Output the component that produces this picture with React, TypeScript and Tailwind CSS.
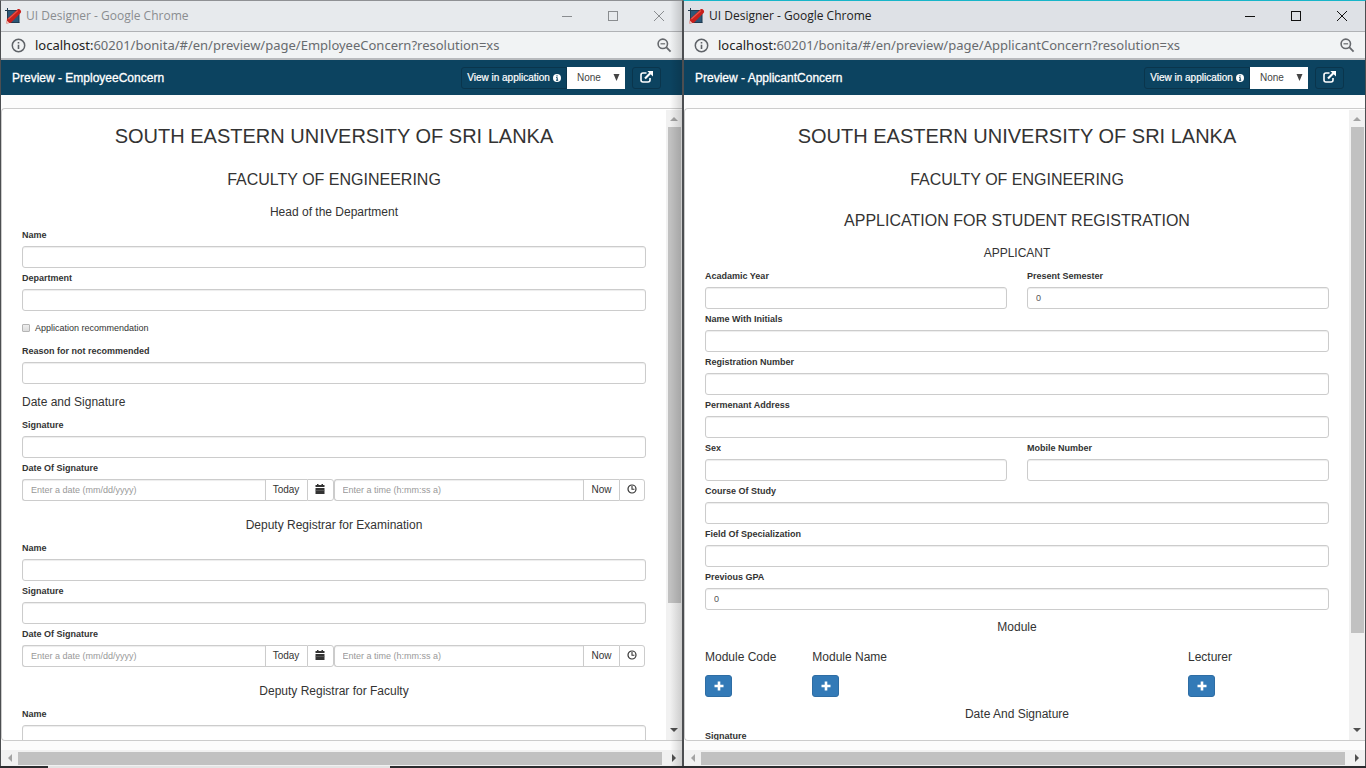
import { useId, type ReactNode } from "react";

const inputClass =
  "block h-[22px] w-full min-w-0 border border-[#ccc] bg-white px-2 text-[9px] text-[#555] shadow-[inset_0_1px_1px_rgba(0,0,0,0.075)] outline-none placeholder:text-[#999]";

function Label({ htmlFor, children }: { htmlFor: string; children: ReactNode }) {
  return (
    <label htmlFor={htmlFor} className="flex h-[21px] items-center text-[9px] font-bold leading-none text-[#333]">
      {children}
    </label>
  );
}

function Field({ label, value }: { label: string; value?: string }) {
  const id = useId();
  return (
    <div>
      <Label htmlFor={id}>{label}</Label>
      <input id={id} type="text" defaultValue={value} className={`${inputClass} rounded-[3px]`} />
    </div>
  );
}

function CalendarIcon() {
  return (
    <svg width="10" height="10" viewBox="0 0 10 10" fill="#333" aria-hidden="true">
      <path d="M0.5 1H2V0h1.5v1h3V0H8v1h1.5v2h-9zM0.5 4h9v2h-9zM0.5 6.6h9V10h-9z" />
      <path d="M0.5 6h9v1h-9z" fill="#555" />
    </svg>
  );
}

function ClockIcon() {
  return (
    <svg width="10" height="10" viewBox="0 0 10 10" fill="none" stroke="#333" aria-hidden="true">
      <circle cx="5" cy="5" r="4" strokeWidth="1.2" />
      <path d="M5 2v3.2h2.4" strokeWidth="1.1" />
    </svg>
  );
}

function DateField({ label }: { label: string }) {
  const id = useId();
  const button = "flex h-[22px] shrink-0 items-center justify-center border border-[#ccc] bg-white pb-[2px] text-[10px] text-[#333]";
  return (
    <div>
      <Label htmlFor={id}>{label}</Label>
      <div className="flex pr-px">
        <div className="flex min-w-0 flex-1">
          <input id={id} type="text" placeholder="Enter a date (mm/dd/yyyy)" className={`${inputClass} rounded-l-[3px] border-r-0`} />
          <button type="button" className={`${button} w-[42px] border-r-0`}>Today</button>
          <button type="button" aria-label="Open calendar" className={`${button} w-[27px] rounded-r-[3px]`}>
            <CalendarIcon />
          </button>
        </div>
        <div className="flex min-w-0 flex-1">
          <input type="text" aria-label="Time" placeholder="Enter a time (h:mm:ss a)" className={`${inputClass} rounded-l-[3px] border-r-0`} />
          <button type="button" className={`${button} w-9 border-r-0`}>Now</button>
          <button type="button" aria-label="Pick time" className={`${button} w-[26px] rounded-r-[3px]`}>
            <ClockIcon />
          </button>
        </div>
      </div>
    </div>
  );
}

function PageTitle({ children }: { children: ReactNode }) {
  return <h1 className="h-[50px] pt-[15px] text-center text-[20px] leading-6 text-[#333]">{children}</h1>;
}

function Subtitle({ children }: { children: ReactNode }) {
  return <h2 className="flex h-[41px] items-center justify-center text-[16px] leading-none text-[#333]">{children}</h2>;
}

function SectionTitle({ children }: { children: ReactNode }) {
  return <h3 className="flex h-[25px] items-center justify-center pb-[2px] text-[12px] leading-none text-[#333]">{children}</h3>;
}

function GroupTitle({ children }: { children: ReactNode }) {
  return <h3 className="h-[37px] pt-4 text-center text-[12px] leading-4 text-[#333]">{children}</h3>;
}

function ModuleColumn({ title, span }: { title: string; span: string }) {
  return (
    <div className={span}>
      <h4 className="h-[28px] text-[12px] leading-5 text-[#333]">{title}</h4>
      <button
        type="button"
        aria-label={`Add ${title}`}
        className="flex h-[22px] w-[27px] items-center justify-center rounded-[3px] border border-[#2e6da4] bg-[#337ab7] pb-px"
      >
        <svg width="10" height="10" viewBox="0 0 10 10" fill="white" aria-hidden="true">
          <path d="M3.7 0.5h2.6v3.2h3.2v2.6H6.3v3.2H3.7V6.3H0.5V3.7h3.2z" />
        </svg>
      </button>
    </div>
  );
}

function EmployeeForm() {
  return (
    <form>
      <PageTitle>SOUTH EASTERN UNIVERSITY OF SRI LANKA</PageTitle>
      <Subtitle>FACULTY OF ENGINEERING</Subtitle>
      <SectionTitle>Head of the Department</SectionTitle>
      <Field label="Name" />
      <Field label="Department" />
      <label className="flex h-[30px] items-center gap-[5px] pt-1 text-[9px] leading-none text-[#333]">
        <input
          type="checkbox"
          className="size-2 shrink-0 appearance-none rounded-[1px] border border-[#b5b5b5] bg-linear-to-b from-[#eee] to-[#ddd]"
        />
        Application recommendation
      </label>
      <Field label="Reason for not recommended" />
      <h3 className="h-[31px] pt-[10px] text-[12px] leading-4 text-[#333]">Date and Signature</h3>
      <Field label="Signature" />
      <DateField label="Date Of Signature" />
      <GroupTitle>Deputy Registrar for Examination</GroupTitle>
      <Field label="Name" />
      <Field label="Signature" />
      <DateField label="Date Of Signature" />
      <GroupTitle>Deputy Registrar for Faculty</GroupTitle>
      <Field label="Name" />
    </form>
  );
}

function ApplicantForm() {
  return (
    <form>
      <PageTitle>SOUTH EASTERN UNIVERSITY OF SRI LANKA</PageTitle>
      <Subtitle>FACULTY OF ENGINEERING</Subtitle>
      <Subtitle>APPLICATION FOR STUDENT REGISTRATION</Subtitle>
      <SectionTitle>APPLICANT</SectionTitle>
      <div className="grid grid-cols-2 gap-x-5">
        <Field label="Acadamic Year" />
        <Field label="Present Semester" value="0" />
      </div>
      <Field label="Name With Initials" />
      <Field label="Registration Number" />
      <Field label="Permenant Address" />
      <div className="grid grid-cols-2 gap-x-5">
        <Field label="Sex" />
        <Field label="Mobile Number" />
      </div>
      <Field label="Course Of Study" />
      <Field label="Field Of Specialization" />
      <Field label="Previous GPA" value="0" />
      <h3 className="h-[37px] pt-[9px] text-center text-[12px] leading-4 text-[#333]">Module</h3>
      <div className="grid grid-cols-12 gap-x-5">
        <ModuleColumn title="Module Code" span="col-span-2" />
        <ModuleColumn title="Module Name" span="col-span-7" />
        <ModuleColumn title="Lecturer" span="col-span-3" />
      </div>
      <h3 className="h-[29px] pt-[9px] text-center text-[12px] leading-4 text-[#333]">Date And Signature</h3>
      <Field label="Signature" />
    </form>
  );
}

function AppIcon() {
  return (
    <svg width="17" height="16" viewBox="0 0 17 16" aria-hidden="true">
      <rect x="2" y="2.5" width="12" height="12" fill="#2c5878" />
      <path d="M2.5 0v14.5h12M0 2.5h14v12" fill="none" stroke="#1f3a50" />
      <path d="M1.4 15.6l.6-4.6L12.4 1.4c1.8-1.2 4.6 1.4 3.4 3.4L6 14.8z" fill="#c8201c" />
      <path d="M3.4 11L12.8 2.6" stroke="#e8584c" strokeWidth="1.2" />
      <path d="M1.4 15.6l.4-3 2.6 2.4z" fill="#f0c0b8" />
    </svg>
  );
}

function Arrow({ direction, color }: { direction: "up" | "down" | "left" | "right"; color: string }) {
  const points = {
    up: "0,6 4,2 8,6",
    down: "0,2 4,6 8,2",
    left: "6,0 2,4 6,8",
    right: "2,0 6,4 2,8",
  }[direction];
  return (
    <svg width="8" height="8" viewBox="0 0 8 8" fill={color} aria-hidden="true">
      <polygon points={points} />
    </svg>
  );
}

type WindowProps = {
  name: string;
  active: boolean;
  frame: string;
  thumb: string;
  children: ReactNode;
};

function BrowserWindow({ name, active, frame, thumb, children }: WindowProps) {
  const ink = active ? "#111" : "#8a8d90";
  return (
    <section className={`relative flex min-h-0 min-w-0 flex-col border-x border-t bg-[#fcfcfc] ${frame}`}>
      <header
        className={`flex h-[31px] shrink-0 items-center border-b border-[#b0b2b5] pl-1 ${
          active ? "bg-[#dee1e6] text-[#222]" : "bg-[#e7eaed] text-[#8a8d90]"
        }`}
      >
        <AppIcon />
        <span className="ml-1 font-['Open_Sans',sans-serif] text-[12px] leading-none">UI Designer - Google Chrome</span>
        <div className="ml-auto flex">
          <button type="button" aria-label="Minimize" className="flex w-[46px] justify-center">
            <svg width="11" height="11" viewBox="0 0 11 11" stroke={ink}><path d="M0 5.5h10" /></svg>
          </button>
          <button type="button" aria-label="Maximize" className="flex w-[46px] justify-center">
            <svg width="11" height="11" viewBox="0 0 11 11" fill="none" stroke={ink}><rect x="0.5" y="0.5" width="9" height="9" /></svg>
          </button>
          <button type="button" aria-label="Close" className="flex w-[46px] justify-center">
            <svg width="11" height="11" viewBox="0 0 11 11" stroke={ink}><path d="M0 0l10 10M10 0l-10 10" /></svg>
          </button>
        </div>
      </header>
      <div className="flex h-[28px] shrink-0 items-center border-b-2 border-[#b8babd] bg-[#f1f3f4] px-[10px]">
        <svg width="15" height="15" viewBox="0 0 15 15" fill="none" stroke="#5f6368" aria-hidden="true">
          <circle cx="7.5" cy="7.5" r="6.2" strokeWidth="1.5" />
          <path d="M7.5 6.7v4.3M7.5 4v1.5" strokeWidth="1.6" />
        </svg>
        <p className="ml-[9px] font-['Noto_Sans',sans-serif] text-[13px] leading-none text-[#686b6f]">
          <span className="text-[#222]">localhost:</span>60201/bonita/#/en/preview/page/{name}?resolution=xs
        </p>
        <svg className="ml-auto" width="15" height="15" viewBox="0 0 15 15" fill="none" stroke="#66696d" strokeWidth="1.6" aria-hidden="true">
          <circle cx="5.8" cy="5.8" r="4.7" />
          <path d="M3.5 5.8h4.6" strokeWidth="1.2" />
          <path d="M9.2 9.2l4.4 4.4" strokeWidth="1.8" />
        </svg>
      </div>
      <nav className="flex h-[35px] shrink-0 items-center bg-[#0c4360] pl-[11px] pr-[21px]">
        <h1 className="text-[12px] leading-none text-white [-webkit-text-stroke:0.3px_white]">Preview - {name}</h1>
        <div className="ml-auto flex items-center">
          <button
            type="button"
            className="flex h-[22px] w-[106px] items-center justify-center gap-[3px] rounded-l-[3px] border border-[#0a354c] text-[10px] text-white"
          >
            <span className="[-webkit-text-stroke:0.2px_white]">View in application</span>
            <svg width="8" height="8" viewBox="0 0 8 8" aria-hidden="true">
              <circle cx="4" cy="4" r="4" fill="white" />
              <path d="M4 1.2v1.3M3.2 3.5h1v3M3 6.2h2.2" stroke="#0c4360" fill="none" />
            </svg>
          </button>
          <div className="relative">
            <select aria-label="Device" className="block h-[22px] w-[58px] appearance-none bg-white pb-px pl-[10px] text-[10px] text-[#444]">
              <option>None</option>
            </select>
            <svg className="pointer-events-none absolute right-[5px] top-[7px]" width="7" height="7" viewBox="0 0 7 7" fill="#444" aria-hidden="true">
              <path d="M0.5 0h6L3.5 7z" />
            </svg>
          </div>
          <button type="button" aria-label="Open in new window" className="ml-[7px] flex h-[22px] w-[29px] items-center justify-center rounded-[3px] border border-[#0a354c] pb-[2px]">
            <svg width="13" height="12" viewBox="0 0 13 12" fill="none" aria-hidden="true">
              <path d="M6.5 2H3Q1 2 1 4v5q0 2 2 2h5q2 0 2-2V7" stroke="white" strokeWidth="1.6" />
              <path d="M5 7.5L10.5 2" stroke="white" strokeWidth="2.2" />
              <path d="M7.3 0H13v5.5z" fill="white" />
            </svg>
          </button>
        </div>
      </nav>
      <div className="mt-[13px] flex min-h-0 flex-1 rounded-l-[4px] border-y border-l border-[#ccc] bg-white">
        <main className="min-w-0 flex-1 overflow-hidden px-5">{children}</main>
        <div className="mt-px flex w-4 shrink-0 flex-col items-center bg-[#f1f1f1]">
          <span className="flex h-[17px] items-center"><Arrow direction="up" color="#a3a3a3" /></span>
          <div className="flex min-h-0 w-full flex-1 flex-col pl-[2px] pr-px">
            <div className={`w-full bg-[#c1c1c1] ${thumb}`} />
          </div>
          <span className="flex h-[18px] items-center pb-[2px]"><Arrow direction="down" color="#505050" /></span>
        </div>
      </div>
      <div className="mt-[9px] flex h-4 shrink-0 items-center bg-[#f1f1f1]">
        <span className="flex w-[17px] justify-center"><Arrow direction="left" color="#a3a3a3" /></span>
        <div className="h-[13px] flex-1 bg-[#c1c1c1]" />
        <span className="flex w-5 justify-center pl-1"><Arrow direction="right" color="#505050" /></span>
      </div>
      {!active && (
        <div className="pointer-events-none absolute inset-y-0 right-0 w-3 bg-linear-to-r from-transparent to-black/15" />
      )}
    </section>
  );
}

export default function App() {
  return (
    <div className="flex h-screen flex-col overflow-hidden bg-[#2b2b2e] font-['Liberation_Sans',Arial,sans-serif]">
      <div className="grid min-h-0 flex-1 grid-cols-2 grid-rows-1">
        <BrowserWindow name="EmployeeConcern" active={false} frame="border-x-[#4c4e51] border-t-[#8f9194]" thumb="h-[80%]">
          <EmployeeForm />
        </BrowserWindow>
        <BrowserWindow name="ApplicantConcern" active frame="border-x-[#4c4e51] border-t-[#18b5c9]" thumb="h-[85%]">
          <ApplicantForm />
        </BrowserWindow>
      </div>
      <div className="flex h-[2px] shrink-0">
        <div className="ml-12 w-1/4 bg-[#e4e4e4]" />
      </div>
    </div>
  );
}
